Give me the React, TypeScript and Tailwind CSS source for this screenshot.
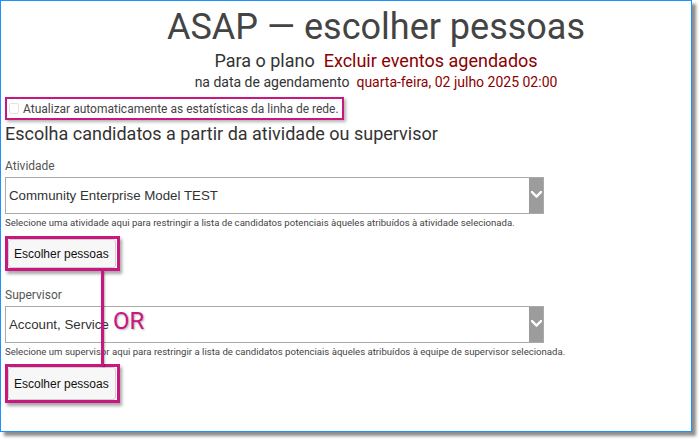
import React from "react";

function Chevron() {
  return (
    <svg width="11" height="7" viewBox="0 0 11 7" className="block">
      <path d="M1 1 L5.5 5.5 L10 1" fill="none" stroke="#ffffff" strokeWidth="2.4" strokeLinecap="square" />
    </svg>
  );
}

function SelectBox({ value }: { value: string }) {
  return (
    <div className="mt-[3px] w-[539px] h-[37px] border border-[#aaaaaa] flex items-stretch bg-white">
      <div className="flex-1 flex items-center pl-[3px] whitespace-nowrap font-['Liberation_Sans',Arial,sans-serif] text-[13.3px] text-[#333]">
        {value}
      </div>
      <div className="w-[14px] bg-[#9c9c9c] flex items-center justify-center pb-[3px]">
        <Chevron />
      </div>
    </div>
  );
}

function PickButton({ h }: { h: string }) {
  return (
    <div className="w-[115px] border-[3px] border-[#c8177f] shadow-[2px_3px_3px_rgba(0,0,0,0.35)] bg-white">
      <div
        className={
          "w-[108px] rounded-[3px] border border-[#cfcfcf] bg-[#f7f7f7] flex items-center pl-[5px] whitespace-nowrap font-['Liberation_Sans',Arial,sans-serif] text-[12px] text-[#111] " +
          h
        }
      >
        Escolher pessoas
      </div>
    </div>
  );
}

export default function App() {
  return (
    <div className="w-[699px] h-[440px] bg-white">
      <div className="relative w-[692px] h-[432px] border border-[#1e90ff] bg-white shadow-[4px_4px_3px_rgba(0,0,0,0.45)] overflow-hidden pl-[4px] font-['Roboto',sans-serif]">
        <div className="pl-[56px] text-center">
          <div className="mt-[4px] text-[36px] leading-[44px] text-[#444]">ASAP — escolher pessoas</div>
          <div className="text-[18px] leading-[24px] text-[#333]">
            Para o plano<span className="ml-[9px] text-[#8b0000]">Excluir eventos agendados</span>
          </div>
          <div className="text-[14px] leading-[18px] text-[#333]">
            na data de agendamento<span className="ml-[7px] text-[#8b0000]">quarta-feira, 02 julho 2025 02:00</span>
          </div>
        </div>

        <div className="mt-[6px] w-[339px] h-[23px] border-[2px] border-[#c8177f] shadow-[2px_2px_3px_rgba(0,0,0,0.3)] flex items-center pl-[2px]">
          <div className="w-[10px] h-[11px] border border-[#e2e2e2] rounded-[2px] bg-white" />
          <span className="ml-[4px] whitespace-nowrap text-[12px] text-[#444]">Atualizar automaticamente as estatísticas da linha de rede.</span>
        </div>

        <div className="mt-[3px] text-[18px] leading-[22px] text-[#333]">
          Escolha candidatos a partir da atividade ou supervisor
        </div>

        <div className="mt-[13px] text-[12px] leading-[16px] text-[#555]">Atividade</div>
        <SelectBox value="Community Enterprise Model TEST" />
        <div className="mt-[3px] whitespace-nowrap text-[9.6px] leading-[12px] text-[#444]">
          Selecione uma atividade aqui para restringir a lista de candidatos potenciais àqueles atribuídos à atividade selecionada.
        </div>
        <div className="mt-[7px]">
          <PickButton h="h-[29px]" />
        </div>

        <div className="mt-[16px] text-[12px] leading-[16px] text-[#555]">Supervisor</div>
        <SelectBox value="Account, Service" />
        <div className="mt-[3px] whitespace-nowrap text-[9.6px] leading-[12px] text-[#444]">
          Selecione um supervisor aqui para restringir a lista de candidatos potenciais àqueles atribuídos à equipe de supervisor selecionada.
        </div>
        <div className="mt-[6px]">
          <PickButton h="h-[33px]" />
        </div>

        <div className="absolute left-[100px] top-[270px] w-[3px] h-[95px] bg-[#c8177f] shadow-[1px_1px_2px_rgba(0,0,0,0.3)]" />
        <div className="absolute left-[112px] top-[306px] text-[24px] leading-[28px] text-[#c8177f] [text-shadow:1px_1px_2px_rgba(0,0,0,0.3)]">
          OR
        </div>
      </div>
    </div>
  );
}
